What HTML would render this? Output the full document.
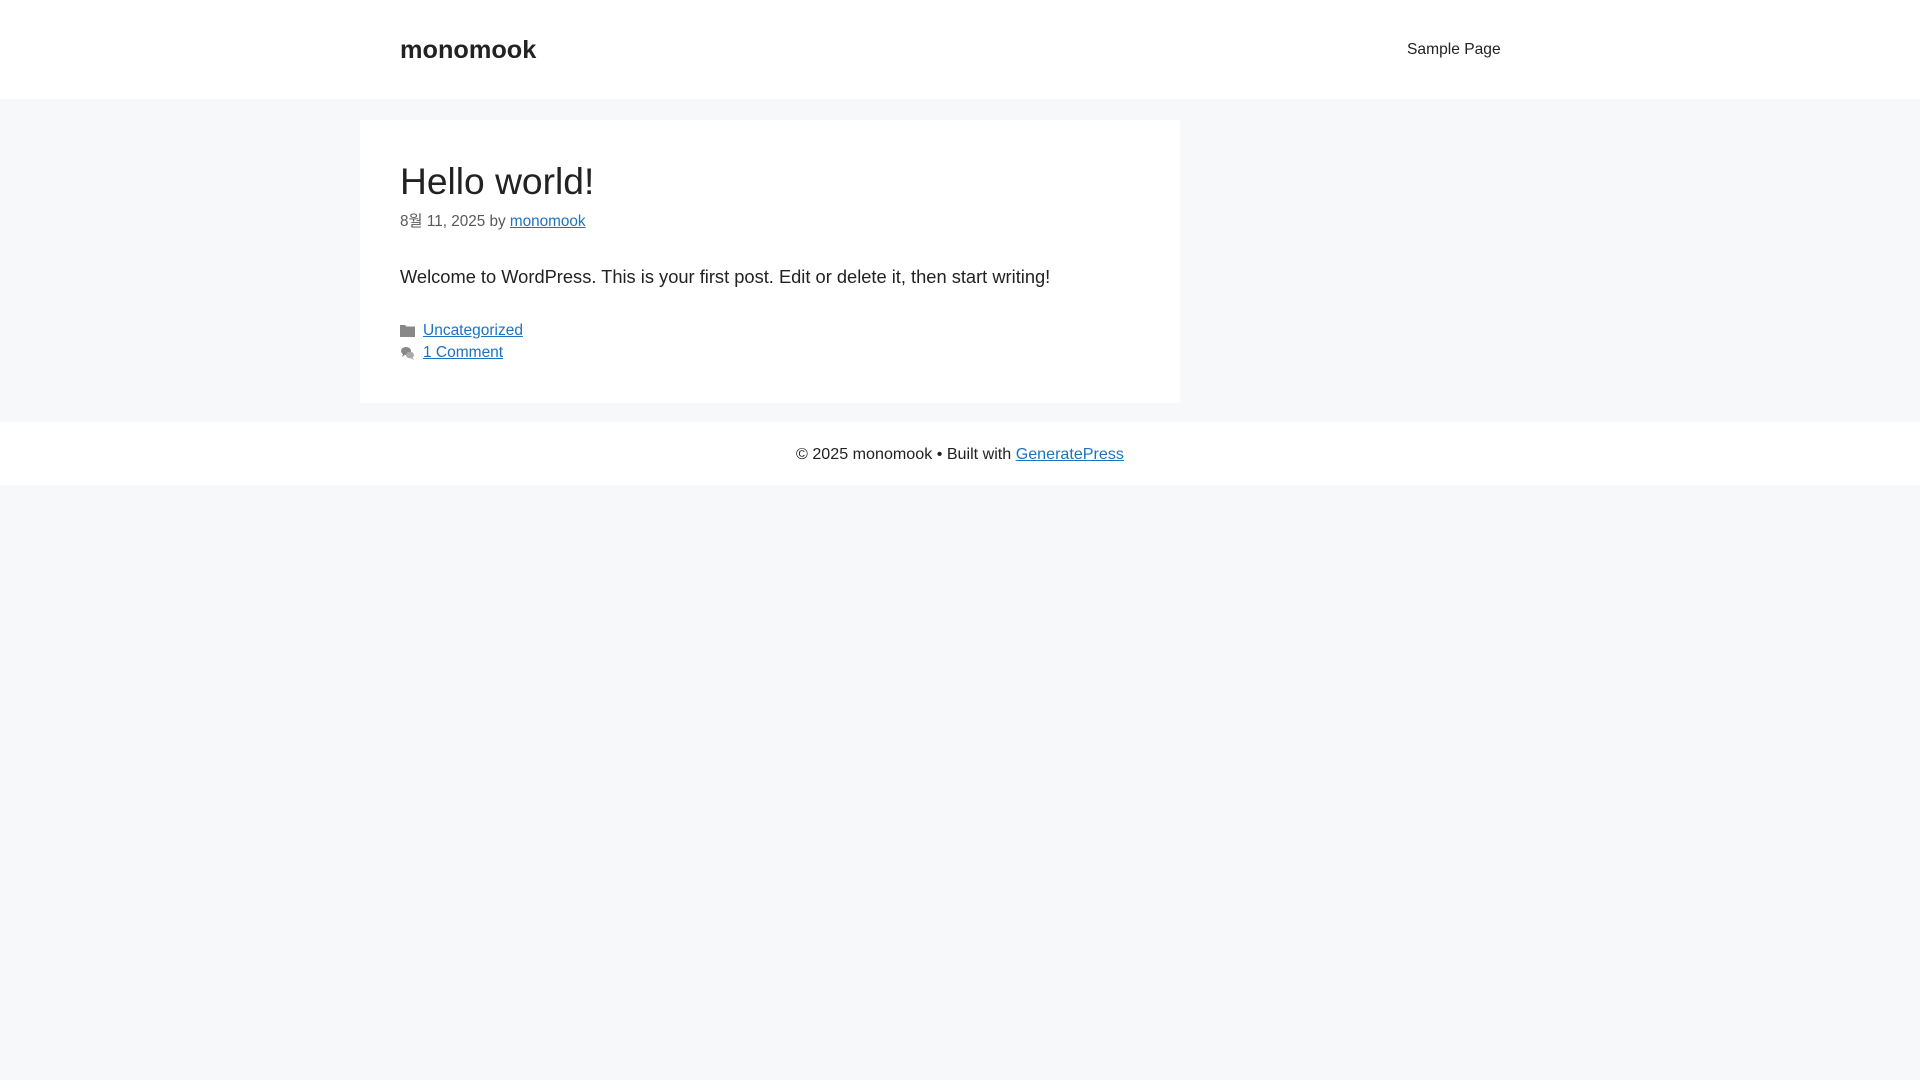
<!DOCTYPE html>
<html><head><meta charset="utf-8"><style>
body{margin:0;background:#f7f8f9;font-family:"Liberation Sans","Noto Sans CJK KR",sans-serif;color:#222;width:1920px;height:1080px;overflow:hidden}
a{color:#1e73be}
.hdr{background:#fff;height:99px;position:relative}
.logo{position:absolute;left:400px;top:36px;font-size:25.3px;font-weight:bold;color:#222}
.nav{position:absolute;left:1407px;top:41px;font-size:15.6px;color:#222}
.card{position:absolute;left:360px;top:120px;width:820px;height:283px;background:#fff}
h1{position:absolute;left:40px;top:40px;margin:0;font-size:37.2px;font-weight:normal;color:#222}
.meta{position:absolute;left:40px;top:89px;font-size:15.3px;color:#595959}
.body{position:absolute;left:40px;top:146px;font-size:18.3px;color:#222}
.cat{position:absolute;left:40px;font-size:15.5px}
.cat svg{position:absolute;left:0;top:2px}
.cat a{margin-left:23px}
.ftr{position:absolute;top:422px;left:0;width:1920px;height:63px;background:#fff;text-align:center;font-size:16.1px;line-height:65px;color:#222}
</style></head><body>
<div class="hdr"><div class="logo">monomook</div><div class="nav">Sample Page</div></div>
<div class="card">
<h1>Hello world!</h1>
<div class="meta">8월 11, 2025 by <a href="#">monomook</a></div>
<div class="body">Welcome to WordPress. This is your first post. Edit or delete it, then start writing!</div>
<div class="cat" style="top:202px"><svg width="15" height="13" viewBox="0 0 15 13"><path d="M0 1h5l1.5 1.5H15V13H0z" fill="#888"/></svg><a href="#">Uncategorized</a></div>
<div class="cat" style="top:224px"><svg width="15" height="15" viewBox="0 0 15 15"><ellipse cx="6" cy="5" rx="5" ry="4" fill="#888"/><path d="M3 8l-1 3 3-2z" fill="#888"/><ellipse cx="10" cy="9" rx="4" ry="3.3" fill="#aaa"/><path d="M12 11l2 3-4-2z" fill="#aaa"/></svg><a href="#">1 Comment</a></div>
</div>
<div class="ftr">© 2025 monomook • Built with <a href="#">GeneratePress</a></div>
</body></html>
